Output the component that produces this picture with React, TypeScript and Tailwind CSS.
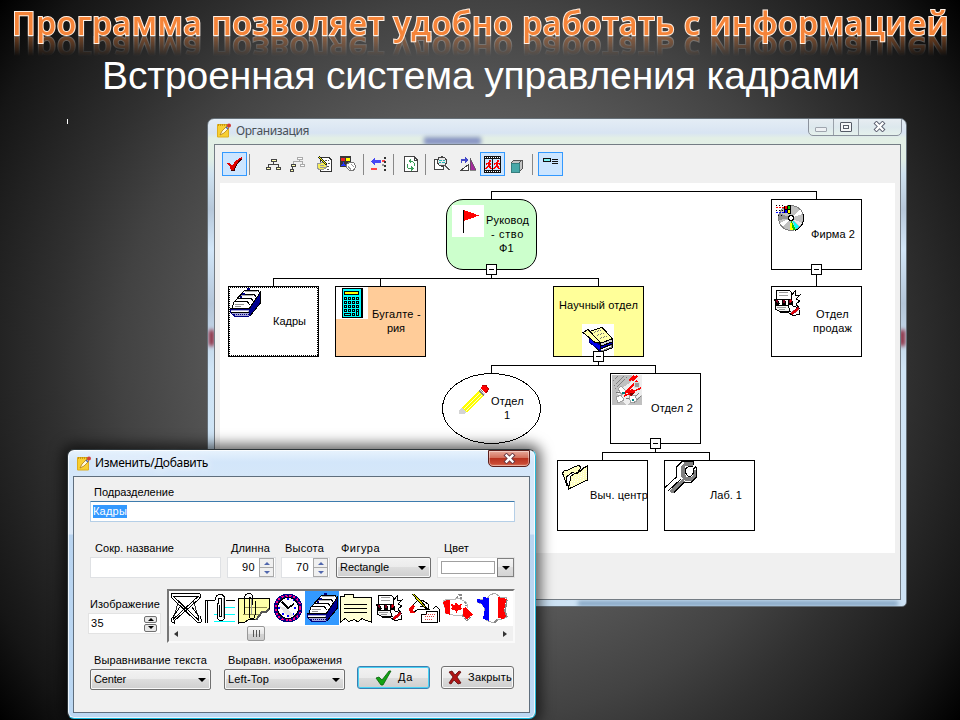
import { useLayoutEffect, useRef, useState } from "react";
import type { ReactNode } from "react";

/* A single line of text tracked so that it fills exactly `w` pixels. */
function Fit({ w, children, className = "" }: { w: number; children: string; className?: string }) {
  const ref = useRef<HTMLSpanElement>(null);
  const [spacing, setSpacing] = useState(0);
  useLayoutEffect(() => {
    if (ref.current) {
      const natural = ref.current.getBoundingClientRect().width;
      setSpacing((w - natural) / children.length);
    }
  }, []);
  return (
    <span ref={ref} className={`inline-block whitespace-pre ${className}`} style={{ letterSpacing: spacing }}>
      {children}
    </span>
  );
}

function Pic({ w = 32, h = 32, children, className = "" }: { w?: number; h?: number; children: ReactNode; className?: string }) {
  return (
    <svg width={w} height={h} viewBox={`0 0 ${w} ${h}`} shapeRendering="crispEdges" fill="none" className={`block shrink-0 ${className}`}>
      {children}
    </svg>
  );
}

/* ---------- 32px pictures ---------- */

const FlagPic = () => (
  <Pic>
    <rect width="32" height="32" fill="#fff" />
    <path d="M12 5L27 10.500L12 16Z" fill="#f00" />
    <path d="M11.500 5V28" stroke="#000" />
  </Pic>
);

const DiscPic = () => (
  <Pic>
    <circle cx="16" cy="16" r="12.500" fill="#c0c0c0" stroke="#808080" />
    <path d="M16 16L5 11A12 12 0 0 0 4 18Z" fill="#909090" />
    <path d="M16 16L25 7.500L27.500 12Z" fill="#fff" />
    <path d="M16 16L24 24L27 21Z" fill="#e8e8e8" />
    <path d="M16 16L5 21L8 25Z" fill="#fff" />
    <path d="M16 18L14.500 28H18Z" fill="#ff0" />
    <path d="M16 18L18 28H21Z" fill="#00c800" />
    <path d="M17 18L21 27L24 25Z" fill="#0ff" />
    <path d="M28 12A13 13 0 0 1 20 28.500" stroke="#000" />
    <path d="M9 4L16 3V12L9 11Z" fill="#000" />
    <path d="M10 4H12V7H10Z" fill="#f00" />
    <path d="M13 4H15V7H13Z" fill="#0c0" />
    <path d="M10 8H12V11H10Z" fill="#00f" />
    <path d="M13 8H15V11H13Z" fill="#ff0" />
    <path d="M1 5.500H9" stroke="#f00" strokeDasharray="2 1" />
    <path d="M1 3.500H9M1 8.500H9M3 13.500H9" stroke="#000" strokeDasharray="1 2" />
    <path d="M1 10.500H9" stroke="#00f" strokeDasharray="2 1" />
    <circle cx="16" cy="16" r="2.500" fill="#fff" stroke="#000" strokeWidth="1.500" />
  </Pic>
);

const CardFilePic = () => (
  <Pic>
    <path d="M3 21L5 15L16 3L29 3L31 7L20 22Z" fill="#fff" stroke="#000" />
    <path d="M13 7H25L27 10M9 11H22L24 14M6 14.500H18L21 18" stroke="#000" />
    <path d="M16 4.500H28M12 8.500H24" stroke="#b0b0b0" />
    <path d="M6 17.500H15M6 19.500H12" stroke="#909090" />
    <path d="M18 1H21V3H18ZM13 6H16V8H13ZM11 9H13V11H11Z" fill="#000080" />
    <path d="M31.500 5V16L21 29L20 22Z" fill="#000090" stroke="#000" />
    <path d="M1 22H20L20.500 29L6 29.500L1 25Z" fill="#a8a8d8" stroke="#000080" />
    <path d="M5 27.500H20" stroke="#000080" strokeDasharray="1 1" />
    <path d="M1 21.500H20M2 25.500H20" stroke="#000" />
    <path d="M2 24H19" stroke="#fff" />
  </Pic>
);

const CalculatorPic = () => (
  <Pic>
    <rect width="32" height="32" fill="#fff" />
    <path d="M7 1H27V31H7Z" fill="#000" />
    <path d="M6 1H25V30H6Z" fill="#0ff" stroke="#000" />
    <rect x="8.500" y="4.500" width="14" height="3" fill="#ff0" stroke="#000" />
    {[10, 14, 18, 22].map((y) =>
      [8, 12, 16, 20].map((x) => (
        <g key={`${x}-${y}`}>
          <rect x={x} y={y} width="3" height="3" fill="#000" />
          <rect x={x + 1} y={y + 1} width="1" height="1" fill="#0ff" />
        </g>
      )),
    )}
    <path d="M8.500 26.500H14.500V28.500H8.500ZM16.500 26.500H18.500V28.500H16.500ZM20.500 25V28.500H22.500V25" stroke="#000" />
  </Pic>
);

const BooksPic = () => (
  <Pic>
    <rect width="32" height="32" fill="#fff" />
    <path d="M9 18L18 24L30 19V24L18 28.500Z" fill="#808080" stroke="#000" />
    <path d="M7.500 14L18 21L19 27L8 19Z" fill="#0000f0" stroke="#000080" />
    <path d="M18 22L30 17.500V20L19 25Z" fill="#0000c0" stroke="#000" />
    <path d="M19 26L29 22" stroke="#fff" />
    <path d="M18 19.500L30 15V18L19 22Z" fill="#d0d0d0" stroke="#000" />
    <path d="M7 7.500L20 3.500L30.500 14.500L18 19.500Z" fill="#ffffa8" stroke="#000" />
    <path d="M1 8.500L6 5.500L18.500 18.500L13 18.500Z" fill="#ffffa8" stroke="#000" />
    <path d="M12 8.500L20 5.500M15 11.500L23 8.500M18 14.500L26 11.500" stroke="#777" strokeDasharray="2 1" />
  </Pic>
);

const PencilPic = () => (
  <Pic>
    <path d="M4 23L21 7L26 11L9 28L7 28Z" fill="#ff0" />
    <path d="M6 24.500L22 9.500M8 27L24 11.500" stroke="#fff" strokeWidth="0.800" />
    <path d="M20 7L22 5L28 10L25 12Z" fill="#808080" />
    <path d="M22 6L27 10.500" stroke="#ddd" />
    <path d="M22 4L25 1H28L31 5L29 8L27 9Z" fill="#f00" />
    <path d="M24 1.500L28 1.500L30.500 5L28 9" stroke="#b00" />
    <path d="M1 26L4 23L8 28L6 30H1Z" fill="#d4d4d4" />
  </Pic>
);

const SatellitePic = () => (
  <Pic w={30} h={30}>
    <rect width="30" height="30" fill="#c0c0c0" />
    <path d="M20 0H30V20L15 30L7 23L5 17L20 6Z" fill="#eee" />
    <path d="M1 6L6 1M2 11L12 1M3 14L16 1M18 27L27 18M22 28L29 21" stroke="#808080" strokeDasharray="2 1" />
    <path d="M9 11L14 16L10 20L6 14ZM4 22L9 20L12 25L6 28ZM17 21L23 20L25 26L19 28Z" fill="#fff" stroke="#a0a0a0" />
    <path d="M15 16L20 14L23 17L20 21L16 20Z" fill="#e80000" />
    <path d="M12 19L25 6M12 21L29 13M17 6L22 1M20 6L25 1M14 17L20 15" stroke="#f00" strokeWidth="1.500" />
    <path d="M18 18L22 18L19 22Z" fill="#800000" />
    <circle cx="25" cy="10" r="3" fill="#999" stroke="#ddd" />
    <path d="M10 17H13V19H10ZM20 24H22V26H20Z" fill="#008080" />
    <path d="M14 24L17 23M4 17L8 18" stroke="#777" />
  </Pic>
);

const PaleFolderPic = () => (
  <Pic>
    <path d="M3.500 12L6 9L9 9L13 7L20 4L22 7L8 25Z" fill="#ffffc0" stroke="#000" />
    <path d="M8.500 25L7 16L14 11L16 13L26 6L20 22Z" fill="#fff" stroke="#000" />
    <path d="M9.500 28L12 15L17 12L19 12L28.500 4.500V19Z" fill="#ffffc0" stroke="#000" />
    <path d="M12 25L14 17M15 23L17 15M18 21L20 13M21 20L23 11M24 19L25 10M27 17V7" stroke="#fff" strokeDasharray="1 1" />
  </Pic>
);

const WrenchPic = () => (
  <Pic>
    <path d="M0 27L11 17V6L16 0H28L32 5V16L26 22H18L8 32H0Z" fill="#fff" />
    <path d="M28 3H20L17.500 6V14L21 18H27L30 15V6M19 19L6 31.500" stroke="#808080" strokeWidth="4" />
    <path d="M21.500 7L24 5H32V9H29V12L26 15H22.500L20.500 12Z" fill="#fff" />
    <path d="M28 5H24L20.500 8V12L23 15H26L28.500 12V8L31 5.500" stroke="#000" />
    <path d="M0 26.500L11.500 16V6L17 0.500H28V4M31.500 5.500V16L26 21.500H19L9 31.500M3 30L16 18" stroke="#000" />
    <path d="M13 17V7L18 2M4 27L14 17.500" stroke="#fff" strokeWidth="2" />
  </Pic>
);

const ReportsPic = () => (
  <Pic>
    <path d="M5.500 3H17L19 5V12H4.500V4Z" fill="#fff" stroke="#000" />
    <path d="M7 5.500H16M7 8.500H16" stroke="#999" />
    <path d="M19 9L23 4L23 9L28 8L24 12L28 14L24 17L27 21L21 19Z" fill="#fff" stroke="#000" />
    <path d="M3 12H6V17H3ZM10 12H13V17H10ZM16 12H19V17H16Z" fill="#800020" stroke="#000" />
    <path d="M2 12.500L5 16.500H20" stroke="#000" />
    <path d="M7 13L9 17M14 13L15 17" stroke="#fff" strokeWidth="1.500" />
    <path d="M4 18H16L18 24H7L3 22Z" fill="#f4f4f4" stroke="#000" />
    <path d="M5 20.500H14M7 22.500H13" stroke="#999" />
    <path d="M18 27L26 20L27 22L20 28ZM18 12L20 14L18 16" fill="#e00" stroke="#a00020" strokeWidth="0.800" />
    <path d="M8 25.500H16L21 28.500L27 27.500V23" stroke="#000" />
  </Pic>
);

const ButterflyClipPic = () => (
  <Pic>
    <path d="M2 1.500H29.500L31 4L29 7L4 29V31L1 29.500V27L4 24M30 24L31 27V30L28 31L2 6L1 3L2 1.500" stroke="#000" />
    <path d="M3.500 4.500H28L3.500 27V24L10 15M3.500 4.500L28.500 28V24L22 15" stroke="#000" />
    <path d="M9 8L4 24M23 8L28 24" stroke="#000" strokeWidth="0.800" />
  </Pic>
);

const PaperClipPic = () => (
  <Pic>
    <path d="M1.500 31V8.500H11M3 31V9M22 8.500H31" stroke="#000" />
    <path d="M21 15.500H31M10 22.500H13M21 22.500H31M10 29.500H31" stroke="#0ff" />
    <path d="M11.500 8V6Q12.500 2.500 16.500 2.500T20.500 7V25Q20.500 28.500 17 28.500T13.500 25V11M15.500 13V24Q16 26 17.500 24V8Q17 5 14.500 7V12" stroke="#000" />
    <path d="M19 6V26" stroke="#aaa" />
  </Pic>
);

const ClippedNotePic = () => (
  <Pic>
    <path d="M0.500 6.500H31V17L28 20H24L21 24L18 28L12 27L7 30L0.500 31Z" fill="#ffffa8" stroke="#000" />
    <path d="M31 17L28 20H24L21 24L18 28" stroke="#555" strokeWidth="2" />
    <path d="M6 15.500H29M5 22.500H21" stroke="#908c50" />
    <path d="M6.500 22V6Q7 1.500 11 1.500T14.500 5V13M14.500 8Q14 5 11 6V23Q11 27 14 27Q17 27 17 23V9" stroke="#000" />
    <path d="M13 7V22" stroke="#999" />
  </Pic>
);

const ClockPic = () => (
  <Pic>
    <circle cx="16" cy="16" r="12.500" fill="#fff" stroke="#000080" strokeWidth="4" />
    <circle cx="16" cy="16" r="12.500" stroke="#f08" strokeWidth="2" strokeDasharray="2 2" />
    <circle cx="16" cy="16" r="10.500" stroke="#000" />
    <path d="M7 14L16 25L22 24L15 16Z" fill="#e4e4e4" />
    <path d="M10 10L16 16L22 12" stroke="#000" strokeWidth="1.500" />
    <path d="M15 7H17M23 15V17M15 24H17M7 15V17M10 22H12M21 22H22M21 8H22" stroke="#00f" strokeWidth="1.500" />
  </Pic>
);

const NotePic = () => (
  <Pic>
    <path d="M0.500 4.500H4V2.500H13V5.500H31.500V30L26 28.500L22 26.500L18 30L14 27.500L9 29.500L5 26.500L0.500 30Z" fill="#ffffd4" stroke="#000" />
    <path d="M4 12.500H27M4 16.500H27M4 20.500H27" stroke="#000" />
  </Pic>
);

const WritingHandPic = () => (
  <Pic>
    <path d="M5 13L9 9L14 8L20 12L21 17L11 17L6 20L3 17Z" fill="#fff" stroke="#000" />
    <path d="M4 13L1 17L2 21L7 21L5 18L7 14Z" fill="#e00" />
    <path d="M13.500 22H18V19H29.500V30.500H13.500ZM25 17L28 14L31 17V30" fill="#fff" stroke="#000" />
    <path d="M18 22.500H27M17 24.500H26M17 27.500H24" stroke="#d44" strokeDasharray="1 1" />
    <path d="M5 2L19 17" stroke="#000" strokeWidth="2.500" />
    <path d="M5 2L17 15" stroke="#dd0" />
    <path d="M12 17H19M12 14H16" stroke="#000" />
  </Pic>
);

const CanadaPic = () => (
  <Pic>
    <path d="M1 9L6 7L11 8L16 6L20 8L24 10L26 14L24 18L20 23L11 23L3 21L3 16Z" fill="#fff" stroke="#bbb" />
    <path d="M1 10L5 8H8V23L3 21V16Z" fill="#f00" />
    <path d="M21 16L24 15L26 18L30 21L31 23L28 24L25 27L21 24Z" fill="#f00" />
    <path d="M14 10L16 13L20 12L19 15L20 17L15 19V21H14V19L9 17L10 15L9 12L13 13Z" fill="#f00" />
    <path d="M15 6L17 3L19 2V6L21 8M23 10L24 14M20 24L25 28L29 25" stroke="#888" strokeDasharray="2 1" strokeWidth="1.500" />
  </Pic>
);

const FrancePic = () => (
  <Pic>
    <path d="M14 3L19 1L24 5L31 6L30 14L28 20L31 25L26 27L21 27L18 31L12 29L8 26L9 17L6 12L1 10V7L7 8V5L11 7Z" fill="#fff" stroke="#aaa" />
    <path d="M1 7L7 8V5L13 6V29L7 27L9 17L6 12L1 10Z" fill="#00f" />
    <path d="M22 5L31 7L29 13L28 19L31 24L27 27L22 26Z" fill="#f00" />
    <path d="M31 8L29 19L31 25M21 28L18 31" stroke="#888" strokeWidth="1.500" />
  </Pic>
);

/* ---------- toolbar pictures ---------- */

const CheckRed = () => (
  <Pic w={17} h={16}>
    <path d="M1 7H4L6 10Q9 4 16 1V2Q11 7 8 14H5Q4 10 1 8Z" fill="#e00000" />
    <path d="M5 14.500H8Q10 8 15.500 3" stroke="#400" />
  </Pic>
);

const TreeIcon = () => (
  <Pic w={16} h={12}>
    <path d="M5 1H11V4H5ZM0 9H5V12H0ZM10 9H15V12H10Z" fill="#444" />
    <path d="M6 2H10V3H6ZM1 10H4V11H1ZM11 10H14V11H11Z" fill="#ffffb0" />
    <path d="M7.500 4V6M2.500 9V6.500H12.500V9" stroke="#444" />
  </Pic>
);

const TreeAddIcon = () => (
  <Pic w={16} h={16}>
    <path d="M7.500 1.500H12.500V3.500H7.500ZM10.500 8.500H14.500V10.500H10.500Z" fill="#fff" stroke="#aaa" />
    <path d="M9.500 4V5.500H3.500V8M12.500 6V8M9 5.500H13" stroke="#aaa" />
    <path d="M1 8H6V11H1ZM0 13H4V16H0Z" fill="#444" />
    <path d="M2 9H5V10H2ZM1 14H3V15H1Z" fill="#ffffb0" />
    <path d="M2.500 11V13" stroke="#444" />
  </Pic>
);

const EditPageIcon = () => (
  <Pic w={17} h={17}>
    <path d="M4.500 1.500H13L15.500 4V15.500H4.500Z" fill="#fff" stroke="#333" />
    <path d="M9 4.500H13M9 7.500H14M11 10.500H14M11 13.500H14" stroke="#555" strokeDasharray="2 1" />
    <path d="M1 8L8 6L11 11L8 13L3 14L1 11Z" fill="#f6ee58" stroke="#999" />
    <path d="M3 1L11 9" stroke="#222" strokeWidth="2" />
    <path d="M3 1L10 8" stroke="#ff0" />
    <path d="M4 9.500H8M4 11.500H9" stroke="#999" />
  </Pic>
);

const ShapesIcon = () => (
  <Pic w={17} h={16}>
    <rect width="11" height="11" fill="#383838" />
    <rect x="1" y="2" width="4" height="3" fill="#e22" />
    <circle cx="8" cy="3.500" r="2" fill="#ff0" />
    <path d="M3.500 6L6 10H1Z" fill="#23f" />
    <path d="M6 9L10 6L14 7L16 11L13 15L9 14L6 11Z" fill="#fff" stroke="#777" />
    <path d="M8 10L11 14M11 8L14 11" stroke="#999" />
  </Pic>
);

const MoveLeftIcon = () => (
  <Pic w={16} h={15}>
    <path d="M0 4.500L4 1V3H10V6H4V8Z" fill="#4848f4" />
    <rect x="11" y="3" width="3" height="2" fill="#f44" />
    <rect y="11" width="6" height="2" fill="#f44" />
    <path d="M14 0V15" stroke="#333" strokeWidth="2" strokeDasharray="2 2" />
    <rect x="11" y="7" width="2" height="2" fill="#999" />
  </Pic>
);

const RefreshIcon = () => (
  <Pic w={14} h={17}>
    <path d="M0.500 0.500H10L13.500 4V15.500H0.500Z" fill="#fff" stroke="#444" />
    <path d="M10.500 1V4H13" stroke="#444" />
    <path d="M10 10V7Q9 5 6 5M3.500 8V11Q4 13 8 13" stroke="#3a9f5a" />
    <path d="M7 3V8L4 5ZM7 10V15L10 12.500Z" fill="#3a9f5a" />
  </Pic>
);

const PreviewIcon = () => (
  <Pic w={17} h={16}>
    <path d="M0.500 3.500H4V1.500H9V13.500H0.500Z" fill="#fff" stroke="#444" />
    <circle cx="8" cy="5.500" r="4.500" fill="#e8e8e8" stroke="#444" strokeWidth="1.300" />
    <path d="M5 4.500H8M9 4.500H11M5 6.500H7M8 6.500H11" stroke="#22b5b5" />
    <path d="M11 9L16 14" stroke="#555" strokeWidth="2.500" />
    <path d="M12 9L16 13" stroke="#fff" />
  </Pic>
);

const FlipIcon = () => (
  <Pic w={16} h={16}>
    <path d="M0.500 14.500H8.500V8.500Z" fill="#fff" stroke="#444" />
    <path d="M10 2L16 14H10Z" fill="#a42b9b" stroke="#555" strokeWidth="0.700" />
    <path d="M1.500 7V4H7" stroke="#4449c8" strokeWidth="1.500" />
    <path d="M5 1L8 4L5 7Z" fill="#4449c8" />
  </Pic>
);

const FilmIcon = () => (
  <Pic w={17} h={17}>
    <rect width="17" height="3" fill="#111" />
    <rect y="14" width="17" height="3" fill="#111" />
    <path d="M1 1.500H17M1 15.500H17" stroke="#fff" strokeDasharray="1 1" />
    <path d="M0.500 3V14M8.500 3V14M16.500 3V14" stroke="#111" />
    <path d="M5 4H7V6H5ZM13 4H15V6H13Z" fill="#f00" />
    <path d="M5 6V10M2 8L5 7L7 9M5 9L2 13M5 9L7 13M13 6V10M10 8L13 7L16 8M13 9L10 13M13 9L15 13" stroke="#f00" strokeWidth="1.600" />
  </Pic>
);

const CubeIcon = () => (
  <Pic w={13} h={14}>
    <path d="M1 4L4 1H12V10L9 13H1Z" fill="#c4c4c4" stroke="#555" />
    <path d="M1 4H9V13H1Z" fill="#48a8a8" stroke="#367e7e" />
    <path d="M9 4L12 1" stroke="#555" />
  </Pic>
);

const LegendIcon = () => (
  <Pic w={16} h={8}>
    <rect x="0.500" y="1.500" width="7" height="3" fill="#7df2f2" stroke="#111" />
    <path d="M9 2.500H15M9 4.500H15M9 6.500H15" stroke="#111" />
  </Pic>
);

const AppIcon = () => (
  <svg width="14" height="15" viewBox="0 0 14 15" fill="none" className="block shrink-0">
    <path d="M0.500 1.500H11.500V14H0.500Z" fill="#f8cf32" stroke="#e0ae1c" />
    <path d="M1 2H11" stroke="#b98a0a" strokeWidth="1.500" strokeDasharray="1 1" />
    <path d="M3 12L5 8L10 3L12 5L7 10Z" fill="#fffbe0" stroke="#b07c18" strokeWidth="0.800" />
    <circle cx="12" cy="2.500" r="2" fill="#d03a36" />
    <path d="M9 4L11 6" stroke="#4866b0" strokeWidth="1.500" />
  </svg>
);

const CrossGlyph = ({ dark = "#5c6070" }: { dark?: string }) => (
  <svg width="13" height="11" viewBox="0 0 13 11" fill="none" className="block">
    <path d="M3.500 2.500L9.500 8.500M9.500 2.500L3.500 8.500" stroke={dark} strokeWidth="4.200" strokeLinecap="square" />
    <path d="M3.500 2.500L9.500 8.500M9.500 2.500L3.500 8.500" stroke="#fff" strokeWidth="2.300" strokeLinecap="square" />
  </svg>
);

const Gap = ({ className }: { className: string }) => <span className={`block h-[21px] w-px shrink-0 bg-[#888] ${className}`} />;

/* ---------- organisation chart ---------- */

type Line = { x: number; y: number; w: number; t: string };
type OrgNode = { box: string; pic: ReactNode; at: string; lines: Line[] };

/* Label coordinates are relative to the node's top left corner. */
const nodes: OrgNode[] = [
  { box: "left-[226px] top-[16px] w-[91px] h-[71px] rounded-[17px] border border-black bg-[#ccffcc]", pic: <FlagPic />, at: "left-[5px] top-[5px]", lines: [{ x: 39, y: 14, w: 43, t: "Руковод" }, { x: 44, y: 28, w: 33, t: "- ство" }, { x: 52, y: 42, w: 15, t: "Ф1" }] },
  { box: "left-[551px] top-[16px] w-[91px] h-[71px] border border-black bg-white", pic: <DiscPic />, at: "left-[3px] top-[2px]", lines: [{ x: 39, y: 28, w: 44, t: "Фирма 2" }] },
  { box: "left-[8px] top-[103px] w-[91px] h-[71px] border border-black bg-white", pic: <CardFilePic />, at: "left-0 top-0", lines: [{ x: 44, y: 28, w: 33, t: "Кадры" }] },
  { box: "left-[115px] top-[103px] w-[91px] h-[71px] border border-black bg-[#ffcc99]", pic: <CalculatorPic />, at: "left-0 top-0", lines: [{ x: 36, y: 21, w: 49, t: "Бугалте -" }, { x: 51, y: 35, w: 18, t: "рия" }] },
  { box: "left-[333px] top-[103px] w-[91px] h-[71px] border border-black bg-[#ffff99]", pic: <BooksPic />, at: "left-[28px] top-[37px]", lines: [{ x: 5, y: 12, w: 79, t: "Научный отдел" }] },
  { box: "left-[551px] top-[103px] w-[91px] h-[71px] border border-black bg-white", pic: <ReportsPic />, at: "left-0 top-0", lines: [{ x: 44, y: 21, w: 33, t: "Отдел" }, { x: 41, y: 35, w: 39, t: "продаж" }] },
  { box: "left-[222px] top-[190px] w-[99px] h-[71px]", pic: <PencilPic />, at: "left-[16px] top-[11px]", lines: [{ x: 49, y: 22, w: 33, t: "Отдел" }, { x: 62, y: 36, w: 6, t: "1" }] },
  { box: "left-[390px] top-[190px] w-[91px] h-[71px] border border-black bg-white", pic: <SatellitePic />, at: "left-[1px] top-[1px]", lines: [{ x: 40, y: 28, w: 42, t: "Отдел 2" }] },
  { box: "left-[337px] top-[277px] w-[91px] h-[71px] border border-black bg-white", pic: <PaleFolderPic />, at: "left-px top-0", lines: [{ x: 32, y: 28, w: 58, t: "Выч. центр" }] },
  { box: "left-[444px] top-[277px] w-[91px] h-[71px] border border-black bg-white", pic: <WrenchPic />, at: "left-0 top-0", lines: [{ x: 45, y: 28, w: 32, t: "Лаб. 1" }] },
];

const toggles = ["left-[266px] top-[81px]", "left-[591px] top-[81px]", "left-[373px] top-[168px]", "left-[430px] top-[255px]"];

function OrgChart() {
  return (
    <div className="relative h-[370px] w-[675px] overflow-hidden bg-white text-[11px] leading-[14px] text-black">
      <svg width="675" height="370" viewBox="220 183 675 370" fill="none" stroke="#000" shapeRendering="crispEdges" className="absolute left-0 top-0">
        <path d="M491.500 199V191.500H816.500V199M491.500 270V278M273.500 287V278.500H598.500V287M380.500 279V287M816.500 270V287M598.500 357V365M491.500 374V365.500H655.500V374M655.500 444V452M602.500 460V452.500H709.500V460" />
        <ellipse cx="491.500" cy="408.500" rx="49" ry="35" fill="#fff" />
      </svg>
      {nodes.map((n, i) => (
        <div key={i} className={`absolute ${n.box}`}>
          <div className={`absolute ${n.at}`}>{n.pic}</div>
          {n.lines.map((l) => (
            <span key={l.t} className="absolute" style={{ left: l.x, top: l.y - 1 }}>
              <Fit w={l.w}>{l.t}</Fit>
            </span>
          ))}
        </div>
      ))}
      {/* focus rectangle of the selected department */}
      <svg width="91" height="71" viewBox="0 0 91 71" fill="none" shapeRendering="crispEdges" className="absolute left-[8px] top-[103px]">
        <rect x="1.500" y="1.500" width="88" height="68" stroke="#000" strokeDasharray="1 1" />
      </svg>
      {toggles.map((p) => (
        <div key={p} className={`absolute flex size-[11px] items-center justify-center border border-black bg-white ${p}`}>
          <span className="block h-px w-[5px] bg-black" />
        </div>
      ))}
    </div>
  );
}

function MainWindow() {
  return (
    <section className="absolute left-[207px] top-[118px] flex h-[489px] w-[700px] flex-col overflow-hidden rounded-t-[7px] rounded-b-[5px] border border-[#667078] bg-[linear-gradient(180deg,#e4edf5_0,#d8e4f2_14px,#e3efe6_19px,#e0eee4_40px,#cfe2f0_55px,#b7c8da_90px,#d2e6f8_130px,#b4c6d9_185px,#d0e5f6_250px,#cde2f4_100%)]">
      <span className="absolute left-px top-[211px] h-4 w-[5px] bg-[#851326] blur-[2px]" />
      <span className="absolute right-px top-[211px] h-4 w-[5px] bg-[#851326] blur-[2px]" />
      <span className="absolute bottom-0 left-[370px] h-[5px] w-[320px] bg-[#7fa0bf] blur-[2px]" />
      <span className="absolute left-[216px] top-[18px] h-[8px] w-[57px] bg-[#8794c2] blur-[2px]" />
      <header className="relative flex h-[25px] shrink-0 items-start pl-[9px] pt-[4px]">
        <AppIcon />
        <span className="ml-[5px] mt-[-1px] font-['Noto_Sans'] text-[12px] leading-[18px] text-[#4a5258]">
          <Fit w={73}>Организация</Fit>
        </span>
        <div className="-mt-[5px] ml-auto mr-[4px] flex h-[18px] w-[94px] overflow-hidden rounded-b-[5px] border border-[#8b929d] bg-[linear-gradient(#e7edf2,#dde8ed_50%,#e5f1ec)]">
          <span className="flex w-[25px] items-end justify-center border-r border-[#9aa1aa] pb-[3px]">
            <span className="block h-[5px] w-[12px] rounded-[1px] border border-[#9fa5ae] bg-[#eef1f4]" />
          </span>
          <span className="flex w-[25px] items-center justify-center border-r border-[#9aa1aa] pb-px">
            <span className="flex h-[10px] w-[12px] items-center justify-center rounded-[1px] border border-[#555b66] bg-[#f4f6f8]">
              <span className="block h-[4px] w-[6px] border border-[#555b66]" />
            </span>
          </span>
          <span className="flex flex-1 items-center justify-center pb-px pr-[2px]">
            <CrossGlyph />
          </span>
        </div>
      </header>
      <div className="relative mb-[6px] ml-[6px] mr-[5px] flex min-h-0 flex-1 flex-col border border-[#747c84] bg-[#f0f0f0]">
        <div className="flex h-[38px] shrink-0 items-center pl-[7px]">
          <span className="flex h-6 w-[25px] shrink-0 items-center justify-center border border-[#3399ff] bg-[#cce5ff]"><CheckRed /></span>
          <Gap className="ml-[2px]" />
          <span className="ml-[16px]"><TreeIcon /></span>
          <span className="ml-[8px]"><TreeAddIcon /></span>
          <span className="ml-[10px]"><EditPageIcon /></span>
          <span className="ml-[7px]"><ShapesIcon /></span>
          <Gap className="ml-[6px]" />
          <span className="ml-[7px]"><MoveLeftIcon /></span>
          <Gap className="ml-[6px]" />
          <span className="ml-[10px]"><RefreshIcon /></span>
          <Gap className="ml-[7px]" />
          <span className="ml-[8px]"><PreviewIcon /></span>
          <span className="ml-[9px]"><FlipIcon /></span>
          <span className="ml-[4px] flex h-6 w-[25px] shrink-0 items-center justify-center border border-[#3399ff] bg-[#cce5ff]"><FilmIcon /></span>
          <span className="ml-[5px] mt-[3px]"><CubeIcon /></span>
          <Gap className="ml-[9px]" />
          <span className="ml-[5px] flex h-6 w-[25px] shrink-0 items-start justify-center border border-[#3399ff] bg-[#cce5ff] pt-[4px]"><LegendIcon /></span>
        </div>
        <div className="ml-[5px]">
          <OrgChart />
        </div>
      </div>
    </section>
  );
}

/* ---------- dialog ---------- */

const Arrow = () => <span className="block size-0 border-x-[4px] border-t-[4px] border-x-transparent border-t-black" />;

function Select({ w, label, className }: { w: number; label: string; className: string }) {
  return (
    <div className={`flex h-[21px] items-center justify-between rounded-[2px] border border-[#707070] bg-[linear-gradient(#f2f2f2,#ebebeb_50%,#dddddd_50%,#cfcfcf)] pl-[3px] pr-[4px] shadow-[inset_0_0_0_1px_#f8f8f8] ${className}`}>
      <Fit w={w}>{label}</Fit>
      <Arrow />
    </div>
  );
}

function Spin({ value }: { value: string }) {
  return (
    <div className="flex h-[21px] w-[49px] items-center justify-end border border-[#dfe1e4] bg-white pr-[1px]">
      <span className="-mt-px leading-[14px]"><Fit w={13}>{value}</Fit></span>
      <span className="ml-[4px] flex flex-col border border-[#a9a9a9] bg-[#a9a9a9]">
        <span className="flex h-[8px] w-[13px] items-center justify-center bg-[#f0f0f0]">
          <span className="block size-0 border-x-[3px] border-b-[3px] border-x-transparent border-b-[#5067ad]" />
        </span>
        <span className="mt-px flex h-[8px] w-[13px] items-center justify-center bg-[#f0f0f0]">
          <span className="block size-0 border-x-[3px] border-t-[3px] border-x-transparent border-t-[#5067ad]" />
        </span>
      </span>
    </div>
  );
}

const Lbl = ({ w, children, className = "" }: { w: number; children: string; className?: string }) => (
  <div className={`h-[14px] leading-[14px] ${className}`}>
    <Fit w={w}>{children}</Fit>
  </div>
);

const gallery = [<ButterflyClipPic />, <PaperClipPic />, <ClippedNotePic />, <ClockPic />, <CardFilePic />, <NotePic />, <ReportsPic />, <WritingHandPic />, <CanadaPic />, <FrancePic />];

function Dialog() {
  return (
    <section className="absolute left-[67px] top-[449px] flex h-[270px] w-[469px] flex-col rounded-[7px] border border-[#2c3438] border-b-[#18b8dc] border-r-[#28b8d8] bg-[linear-gradient(180deg,#e8f3fd_0,#d3e6fa_12px,#d5e7f9_26px,#dce9f8_84px,#b9d4f0_85px,#bcd8f3_100%)] shadow-[0_0_13px_5px_rgba(0,0,0,0.6),inset_0_0_0_1px_rgba(255,255,255,0.75)]">
      <header className="flex h-[26px] shrink-0 items-start pl-[9px] pt-[6px]">
        <AppIcon />
        <span className="ml-[4px] mt-[-2px] font-['Noto_Sans'] text-[12px] leading-[18px] text-black [text-shadow:0_0_8px_#fff,0_0_12px_#fff]">
          <Fit w={113}>Изменить/Добавить</Fit>
        </span>
        <span className="-mt-[6px] ml-auto mr-[5px] flex h-[17px] w-[42px] items-center justify-center rounded-b-[5px] border border-[#5b1f1c] bg-[linear-gradient(#e8aa9c,#d3705c_45%,#b83320_50%,#c94a34_85%,#de8167)] shadow-[inset_0_0_0_1px_rgba(255,255,255,0.4)]">
          <CrossGlyph dark="#6b3a44" />
        </span>
      </header>
      <div className="mb-[5px] ml-[5px] mr-[5px] flex flex-1 flex-col border border-[#5f6e7d] bg-[#f0f0f0] pl-[16px] text-[11px] text-black">
        <Lbl w={80} className="ml-[4px] mt-[8px]">Подразделение</Lbl>
        <div className="mt-[2px] flex h-[21px] w-[425px] items-center rounded-[1px] border border-[#b5cfe7] border-t-[#3d7bad] bg-white pl-[2px]">
          <span className="bg-[#3399ff] leading-[13px] text-white"><Fit w={34}>Кадры</Fit></span>
        </div>

        <div className="mt-[19px] flex items-end">
          <div className="w-[137px]">
            <Lbl w={79} className="ml-[5px]">Сокр. название</Lbl>
            <div className="mt-[2px] h-[21px] w-[131px] border border-[#dfe1e4] bg-white" />
          </div>
          <div className="w-[54px]">
            <Lbl w={39} className="ml-[4px]">Длинна</Lbl>
            <div className="mt-[2px]"><Spin value="90" /></div>
          </div>
          <div className="w-[55px]">
            <Lbl w={39} className="ml-[4px]">Высота</Lbl>
            <div className="mt-[2px]"><Spin value="70" /></div>
          </div>
          <div className="w-[101px]">
            <Lbl w={39} className="ml-[5px]">Фигура</Lbl>
            <Select w={49} label="Rectangle" className="mt-[2px] w-[95px]" />
          </div>
          <div>
            <Lbl w={25} className="ml-[7px]">Цвет</Lbl>
            <div className="mt-[2px] flex h-[21px] w-[78px] items-center justify-between border border-[#e3e3e3] bg-white pl-[3px]">
              <span className="block h-[13px] w-[54px] border border-[#a0a0a0] bg-white" />
              <span className="flex h-[19px] w-[17px] items-center justify-center border border-[#808080] bg-[linear-gradient(#f4f4f4,#ebebeb_50%,#ddd_50%,#d4d4d4)]"><Arrow /></span>
            </div>
          </div>
        </div>

        <div className="mt-[11px] flex">
          <div className="-ml-[2px] w-[79px] pt-[8px]">
            <Lbl w={70} className="ml-[2px]">Изображение</Lbl>
            <div className="mt-[2px] flex h-[21px] w-[73px] items-center justify-between border border-[#e3e3e3] bg-white pl-[2px] pr-[3px]">
              <span className="-mt-px leading-[14px]"><Fit w={13}>35</Fit></span>
              <span className="flex flex-col gap-px">
                <span className="flex h-[7px] w-[13px] items-center justify-center rounded-[2px] border border-[#707070] bg-[#e8e8e8]">
                  <span className="block size-0 border-x-[3px] border-b-[3px] border-x-transparent border-b-black" />
                </span>
                <span className="flex h-[8px] w-[13px] items-center justify-center rounded-[2px] border border-[#707070] bg-[#e8e8e8]">
                  <span className="block size-0 border-x-[3px] border-t-[3px] border-x-transparent border-t-black" />
                </span>
              </span>
            </div>
          </div>
          <div className="flex h-[54px] w-[348px] flex-col overflow-hidden border-2 border-b-[#fafafa] border-l-[#777] border-r-[#fafafa] border-t-[#777] bg-white">
            <div className="flex h-[35px] items-start">
              {gallery.map((pic, i) => (
                <span key={i} className={`block h-[34px] w-[34px] shrink-0 pl-px pt-px ${i === 4 ? "bg-[#3399ff]" : ""}`}>{pic}</span>
              ))}
            </div>
            <div className="flex h-[15px] items-center bg-[#f0f0f0] pl-[5px] pr-[6px]">
              <span className="block size-0 border-y-[3.500px] border-r-[4px] border-y-transparent border-r-[#333]" />
              <span className="ml-[69px] flex h-[15px] w-[18px] items-center justify-center gap-[2px] rounded-[2px] border border-[#989898] bg-[linear-gradient(#f6f6f6,#e6e6e6_50%,#d4d4d4_50%,#ccc)]">
                <span className="block h-[7px] w-px bg-[#555]" />
                <span className="block h-[7px] w-px bg-[#555]" />
                <span className="block h-[7px] w-px bg-[#555]" />
              </span>
              <span className="ml-auto block size-0 border-y-[3.500px] border-l-[4px] border-y-transparent border-l-[#333]" />
            </div>
          </div>
        </div>

        <div className="mt-[10px] flex items-end">
          <div className="w-[134px]">
            <Lbl w={113} className="ml-[4px]">Выравнивание текста</Lbl>
            <Select w={32} label="Center" className="mt-[2px] w-[121px]" />
          </div>
          <div className="w-[133px]">
            <Lbl w={114} className="ml-[4px]">Выравн. изображения</Lbl>
            <Select w={41} label="Left-Top" className="mt-[2px] w-[121px]" />
          </div>
          <button className="mb-px flex h-[23px] w-[73px] items-center rounded-[3px] border border-[#3c7fb1] bg-[linear-gradient(#f2f2f2,#ebebeb_50%,#dddddd_50%,#cfcfcf)] pl-[17px] shadow-[inset_0_0_0_1px_#48d2f4]">
            <svg width="17" height="16" viewBox="0 0 17 16" className="mr-[6px] block">
              <path d="M1 8L4 7L7 10L14 1L16 1L8 15H6Z" fill="#12a312" stroke="#07600b" strokeWidth="0.800" />
            </svg>
            <Fit w={15}>Да</Fit>
          </button>
          <button className="mb-px ml-[11px] flex h-[23px] w-[73px] items-center rounded-[3px] border border-[#707070] bg-[linear-gradient(#f2f2f2,#ebebeb_50%,#dddddd_50%,#cfcfcf)] pl-[6px] shadow-[inset_0_0_0_1px_#f8f8f8]">
            <svg width="14" height="15" viewBox="0 0 14 15" className="mr-[6px] block shrink-0">
              <path d="M1 2L4 1L7 5L11 1L13 2L9 7L13 13L10 14L6 10L3 14L1 13L5 7Z" fill="#b01414" stroke="#5c0808" strokeWidth="0.800" />
            </svg>
            <Fit w={44}>Закрыть</Fit>
          </button>
        </div>
      </div>
    </section>
  );
}

export default function App() {
  return (
    <main className="relative h-[720px] w-[960px] overflow-hidden bg-[radial-gradient(circle_600px_at_480px_360px,#7f7f7f_0,#585858_42%,#424242_60%,#303030_71%,#151515_90%,#000_100%)] font-['Liberation_Sans',sans-serif]">
      <h1 className="h-[54px] pl-[12px] font-['Open_Sans'] text-[32px] font-semibold leading-[46px] text-[#f58439] [-webkit-box-reflect:below_-36px_linear-gradient(transparent_0,transparent_16px,rgba(0,0,0,0.42)_36px,transparent_36px)] [-webkit-text-stroke:2px_#fff1e6] [paint-order:stroke_fill]">
        <Fit w={937}>Программа позволяет удобно работать с информацией</Fit>
      </h1>
      <h2 className="pl-[102px] text-[39px] font-normal leading-[44px] text-white">
        <Fit w={758}>Встроенная система управления кадрами</Fit>
      </h2>
      <span className="absolute left-[67px] top-[119px] block h-[5px] w-px bg-white" />
      <MainWindow />
      <Dialog />
    </main>
  );
}
